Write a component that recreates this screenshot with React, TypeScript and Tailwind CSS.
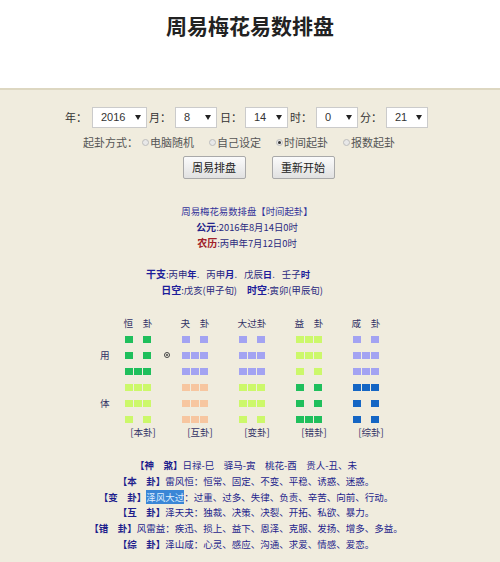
import React from 'react';

const CJK = { fontFamily: '"Noto Sans CJK SC", "Noto Sans", sans-serif' };

// trigram colours
const DUI = 'bg-[#a3a3f2]';
const QIAN = 'bg-[#f7c6a0]';
const ZHEN = 'bg-[#1fbf5c]';
const XUN = 'bg-[#ccf86a]';
const GEN = 'bg-[#1566c4]';

const hexagrams = [
  { title: '恒　卦', label: '[本卦]', lines: [0, 0, 1, 1, 1, 0], up: ZHEN, down: XUN },
  { title: '夬　卦', label: '[互卦]', lines: [0, 1, 1, 1, 1, 1], up: DUI, down: QIAN },
  { title: '大过卦', label: '[变卦]', lines: [0, 1, 1, 1, 1, 0], up: DUI, down: XUN },
  { title: '益　卦', label: '[错卦]', lines: [1, 1, 0, 0, 0, 1], up: XUN, down: ZHEN },
  { title: '咸　卦', label: '[综卦]', lines: [0, 1, 1, 1, 0, 0], up: DUI, down: GEN },
];

function Select({ value, w }: { value: string; w: string }) {
  return (
    <div className="relative">
      <select
        defaultValue={value}
        className={`appearance-none h-[21px] ${w} border border-[#cbcbcb] bg-white pl-[8px] text-[11px] text-[#333] outline-none`}
        style={{ fontFamily: '"Liberation Sans", Arial, sans-serif' }}
      >
        <option>{value}</option>
      </select>
      <svg className="pointer-events-none absolute right-[6px] top-[8px]" width="6" height="5" viewBox="0 0 6 5">
        <path d="M0 0h6L3 5z" fill="#222" />
      </svg>
    </div>
  );
}

function Radio({ label, checked }: { label: string; checked?: boolean }) {
  return (
    <div className="flex items-center">
      <span className="flex h-[7px] w-[7px] items-center justify-center rounded-full border border-[#bdbdbd] bg-[#e8e8e8]">
        {checked && <span className="h-[3px] w-[3px] rounded-full bg-[#333]" />}
      </span>
      <span className="ml-[1px]">{label}</span>
    </div>
  );
}

function Line({ yang, color }: { yang: number; color: string }) {
  return (
    <div className="flex h-[16px] items-center justify-center">
      <div className="flex h-[7px] gap-px">
        <span className={`w-[8.3px] ${color}`} />
        <span className={`w-[8.3px] ${yang ? color : ''}`} />
        <span className={`w-[8.3px] ${color}`} />
      </div>
    </div>
  );
}

function Hex({ h, extra }: { h: (typeof hexagrams)[number]; extra?: string }) {
  return (
    <div className={`w-[40px] ${extra ?? ''}`}>
      <div className="h-[16px] text-center leading-[16px] text-[9.6px] text-[#333366]">{h.title}</div>
      {h.lines.map((l, i) => (
        <Line key={i} yang={l} color={i < 3 ? h.up : h.down} />
      ))}
      <div className="h-[11px] whitespace-nowrap pl-[10px] text-center leading-[11px] text-[9.6px] text-[#333366]">{h.label}</div>
    </div>
  );
}

export default function App() {
  return (
    <div className="min-h-[562px] bg-[#f0ecde]" style={CJK}>
      <header className="h-[90px] border-b-2 border-[#ddd7c1] bg-white pt-[11px]">
        <h1 className="text-center text-[21px] font-bold leading-[28px] text-[#222]">周易梅花易数排盘</h1>
      </header>

      <main className="pt-[17px]">
        {/* date selects */}
        <div className="flex items-center justify-center pr-[7px] text-[11px] text-[#333]">
          <span className="w-[27px]">年：</span>
          <Select value="2016" w="w-[55px]" />
          <span className="ml-[2px] w-[26px]">月：</span>
          <Select value="8" w="w-[42px]" />
          <span className="ml-[3px] w-[25px]">日：</span>
          <Select value="14" w="w-[43px]" />
          <span className="ml-[2px] w-[26px]">时：</span>
          <Select value="0" w="w-[42px]" />
          <span className="ml-[2px] w-[26px]">分：</span>
          <Select value="21" w="w-[42px]" />
        </div>

        {/* method */}
        <div className="mt-[6px] flex h-[16px] items-center justify-center gap-[15px] pr-[22px] text-[11px] text-[#555]">
          <span className="-mr-[11px]">起卦方式：</span>
          <Radio label="电脑随机" />
          <Radio label="自己设定" />
          <Radio label="时间起卦" checked />
          <Radio label="报数起卦" />
        </div>

        <div className="mt-[6px] flex justify-center gap-[26px] pl-[17px]">
          <button className="h-[23px] w-[63px] rounded-[2px] border border-[#a9a9a9] bg-gradient-to-b from-[#fbfbfb] to-[#e1e1e1] text-[11px] text-[#222]">
            周易排盘
          </button>
          <button className="h-[23px] w-[63px] rounded-[2px] border border-[#a9a9a9] bg-gradient-to-b from-[#fbfbfb] to-[#e1e1e1] text-[11px] text-[#222]">
            重新开始
          </button>
        </div>

        {/* result header */}
        <div className="mt-[24px] pr-[6px] text-center text-[9.4px] leading-[16px] text-[#2a2a80]">
          <div className="text-[#33339a]">周易梅花易数排盘【时间起卦】</div>
          <div>
            <b className="text-[10px] text-[#22228a]">公元</b>:2016年8月14日0时
          </div>
          <div>
            <b className="text-[10px] text-[#a0222a]">农历</b>:丙申年7月12日0时
          </div>
          <div className="h-[15px]" />
          <div className="pr-[38px]">
            <b className="text-[10px] text-[#1d1d9a]">干支</b>:丙申<b className="text-[#1d1d9a]">年</b>.
            <span className="inline-block w-[7px]" />丙申<b className="text-[#1d1d9a]">月</b>.
            <span className="inline-block w-[7px]" />戊辰<b className="text-[#1d1d9a]">日</b>.
            <span className="inline-block w-[7px]" />壬子<b className="text-[#1d1d9a]">时</b>
          </div>
          <div className="pr-[10px]">
            <b className="text-[10px] text-[#1d1d9a]">日空</b>:戊亥(甲子旬)
            <span className="inline-block w-[10px]" />
            <b className="text-[10px] text-[#1d1d9a]">时空</b>:寅卯(甲辰旬)
          </div>
        </div>

        {/* hexagram table */}
        <div className="mx-auto mt-[17px] flex w-[300px]">
          <div className="w-[18px] text-[9.6px] text-[#333366]">
            <div className="h-[32px]" />
            <div className="h-[16px] leading-[16px]">用</div>
            <div className="h-[32px]" />
            <div className="h-[16px] leading-[16px]">体</div>
          </div>
          <Hex h={hexagrams[0]} />
          <div className="flex w-[17px] flex-col items-center">
            <div className="h-[32px]" />
            <div className="flex h-[16px] items-center">
              <span className="flex h-[6px] w-[6px] items-center justify-center rounded-full border border-[#444]">
                <span className="h-[2px] w-[2px] rounded-full bg-[#444]" />
              </span>
            </div>
          </div>
          <Hex h={hexagrams[1]} />
          <Hex h={hexagrams[2]} extra="ml-[17px]" />
          <Hex h={hexagrams[3]} extra="ml-[17px]" />
          <Hex h={hexagrams[4]} extra="ml-[17px]" />
        </div>

        {/* interpretations */}
        <div className="mt-[20px] pr-[8px] text-center text-[9.5px] leading-[15.8px] text-[#1e1e8c]">
          <div>
            <b>【神　煞】</b>日禄-巳　驿马-寅　桃花-酉　贵人-丑、未
          </div>
          <div>
            <b>【本　卦】</b>雷风恒：恒常、固定、不变、平稳、诱惑、迷惑。
          </div>
          <div>
            <b>【变　卦】</b>
            <span className="bg-[#3a86d6] text-[#dfeeff]">泽风大过</span>：过重、过多、失律、负责、辛苦、向前、行动。
          </div>
          <div>
            <b>【互　卦】</b>泽天夬：独裁、决策、决裂、开拓、私欲、暴力。
          </div>
          <div>
            <b>【错　卦】</b>风雷益：疾迅、损上、益下、恩泽、克服、发扬、增多、多益。
          </div>
          <div>
            <b>【综　卦】</b>泽山咸：心灵、感应、沟通、求爱、情感、爱恋。
          </div>
        </div>
      </main>
    </div>
  );
}
